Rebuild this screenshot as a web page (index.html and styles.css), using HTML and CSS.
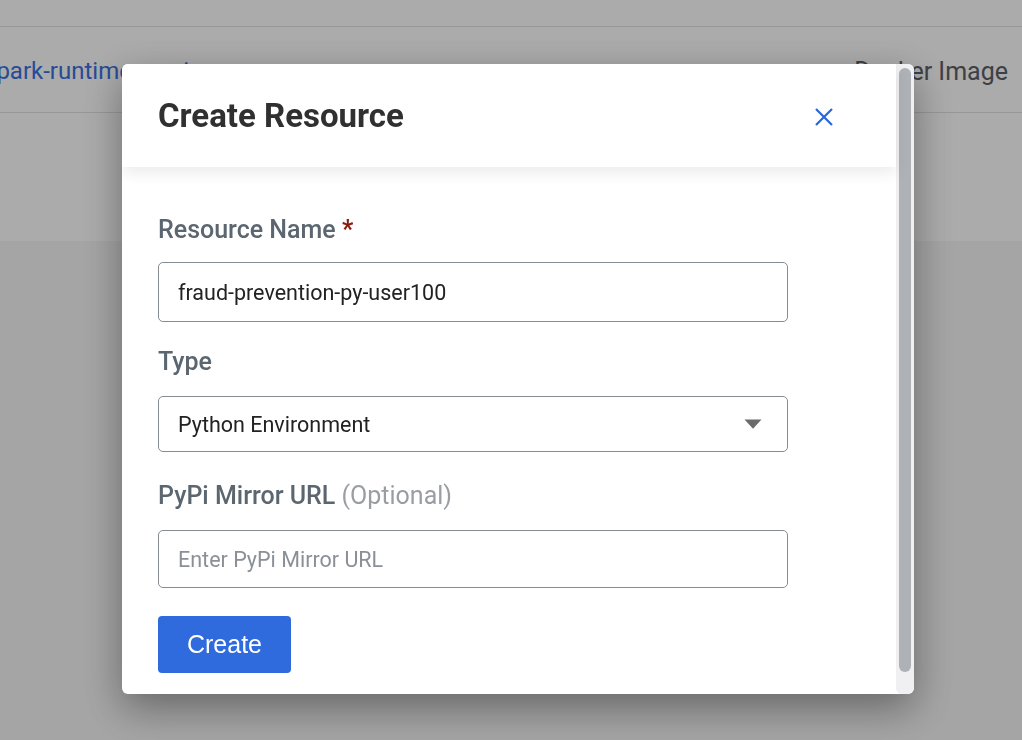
FILE: index.html
```html
<!DOCTYPE html>
<html lang="en">
<head>
<meta charset="utf-8">
<title>Create Resource</title>
<link rel="stylesheet" href="styles.css">
</head>
<body>
<div class="page">
  <div class="table-top"></div>
  <div class="table-row">
    <span class="cell-link">spark-runtime-version</span>
    <span class="cell-type">Docker Image</span>
  </div>
  <div class="table-foot"></div>
  <div class="page-rest"></div>
</div>
<div class="overlay"></div>
<div class="modal">
  <div class="modal-content">
    <div class="modal-header">
      <h1 class="modal-title">Create Resource</h1>
      <button class="close-btn" aria-label="Close">
        <svg width="18" height="18" viewBox="0 0 18 18"><path d="M1 1 L17 17 M17 1 L1 17" stroke="#2767dc" stroke-width="2.2" fill="none"/></svg>
      </button>
    </div>
    <div class="modal-body">
      <div class="field field-first">
        <label class="field-label">Resource Name <span class="req">*</span></label>
        <input class="text-input input-tall" type="text" value="fraud-prevention-py-user100">
      </div>
      <div class="field field-second">
        <label class="field-label">Type</label>
        <div class="select-wrap">
          <select class="select-input"><option>Python Environment</option></select>
          <svg class="select-caret" width="18" height="10" viewBox="0 0 18 10"><path d="M0.5 0.5 L17.5 0.5 L9 9.7 Z" fill="#6b6b6b"/></svg>
        </div>
      </div>
      <div class="field field-third">
        <label class="field-label">PyPi Mirror URL <span class="opt">(Optional)</span></label>
        <input class="text-input input-mid" type="text" placeholder="Enter PyPi Mirror URL">
      </div>
      <button class="create-btn">Create</button>
    </div>
  </div>
  <div class="scroll-rail"><div class="scroll-thumb"></div></div>
</div>
</body>
</html>
```
FILE: styles.css
```css
html, body {
  margin: 0;
  padding: 0;
}
body {
  width: 1022px;
  height: 740px;
  overflow: hidden;
  font-family: Roboto, "Liberation Sans", sans-serif;
  background: #f6f6f6;
}
.page {
  display: flex;
  flex-direction: column;
  height: 740px;
}
.table-top {
  height: 26px;
  background: #ffffff;
  border-bottom: 1px solid #e2e2e2;
}
.table-row {
  height: 86px;
  background: #ffffff;
  display: flex;
  align-items: center;
  justify-content: space-between;
  padding-right: 14px;
  padding-top: 3px;
  border-bottom: 1px solid #e2e2e2;
  font-size: 25px;
  box-sizing: border-box;
}
.cell-link {
  color: #3b70e0;
  font-size: 24px;
  margin-left: -16px;
}
.cell-type {
  color: #5c6067;
}
.table-foot {
  height: 128px;
  background: #ffffff;
}
.page-rest {
  flex: 1;
  background: #f6f6f6;
}
.overlay {
  position: fixed;
  inset: 0;
  background: rgba(0, 0, 0, 0.33);
}
.modal {
  position: fixed;
  left: 122px;
  top: 64px;
  width: 792px;
  height: 630px;
  background: #ffffff;
  border-radius: 6px;
  overflow: hidden;
  display: flex;
  box-shadow: 0 14px 40px rgba(0, 0, 0, 0.38);
}
.modal-content {
  flex: 1;
  display: flex;
  flex-direction: column;
  min-width: 0;
}
.scroll-rail {
  width: 18px;
  flex-shrink: 0;
  background: #f0f0f2;
  border-radius: 0 6px 6px 6px;
  display: flex;
  flex-direction: column;
  padding: 4px 3px 22px 3px;
  box-sizing: border-box;
}
.scroll-thumb {
  flex: 1;
  background: #aeb1b6;
  border-radius: 6px;
}
.modal-header {
  position: relative;
  z-index: 1;
  height: 103px;
  flex-shrink: 0;
  box-sizing: border-box;
  display: flex;
  align-items: center;
  justify-content: space-between;
  padding: 0 63px 0 36px;
  background: #ffffff;
  box-shadow: 0 6px 14px rgba(0, 0, 0, 0.08);
}
.modal-title {
  margin: 0;
  font-size: 33px;
  line-height: 33px;
  font-weight: 700;
  color: #303030;
}
.close-btn {
  border: 0;
  padding: 0;
  background: none;
  display: flex;
  margin-top: 3px;
}
.modal-body {
  padding: 48px 36px 0 36px;
  display: flex;
  flex-direction: column;
  align-items: flex-start;
}
.field {
  display: flex;
  flex-direction: column;
  width: 630px;
}
.field-first {
  gap: 17px;
}
.field-second {
  gap: 19px;
  margin-top: 25px;
}
.field-third {
  gap: 19px;
  margin-top: 29px;
}
.field-label {
  font-size: 25px;
  line-height: 30px;
  font-weight: 500;
  color: #5b6670;
}
.req {
  color: #8b1a10;
  font-weight: 700;
}
.opt {
  color: #9a9ea3;
  font-weight: 400;
}
.text-input, .select-input {
  box-sizing: border-box;
  width: 630px;
  border: 1px solid #878c93;
  border-radius: 5px;
  padding: 0 19px;
  font-family: Roboto, "Liberation Sans", sans-serif;
  font-size: 21.5px;
  color: #222222;
  background: #ffffff;
  outline: none;
  margin: 0;
}
.input-tall {
  height: 60px;
}
.input-mid {
  height: 58px;
}
.text-input::placeholder {
  color: #8b9097;
}
.select-wrap {
  display: grid;
  width: 630px;
}
.select-input {
  grid-area: 1 / 1;
  height: 56px;
  appearance: none;
  -webkit-appearance: none;
}
.select-caret {
  grid-area: 1 / 1;
  justify-self: end;
  align-self: center;
  margin-right: 26px;
  pointer-events: none;
}
.create-btn {
  margin-top: 28px;
  width: 133px;
  height: 57px;
  border: 0;
  border-radius: 4px;
  background: #2f6bdc;
  color: #ffffff;
  font-family: "Liberation Sans", Arial, sans-serif;
  font-size: 25px;
  padding: 0;
}
```
